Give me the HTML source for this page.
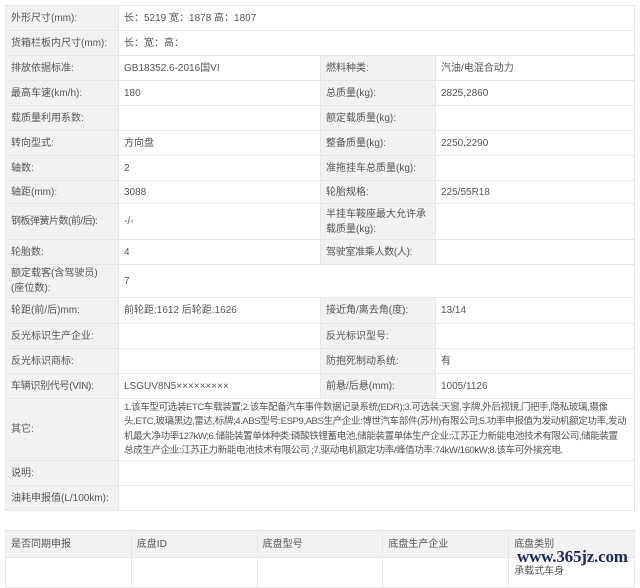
<!DOCTYPE html><html><head><meta charset="utf-8"><style>
body{margin:0;width:640px;height:573px;background:#fff;overflow:hidden;font-family:"Liberation Sans","Noto Sans CJK SC",sans-serif;font-size:10px;color:#555;position:relative}
table{border-collapse:collapse;position:absolute;left:5px;table-layout:fixed}
td{border:1px solid #e6e6e6;padding:0 5px;vertical-align:middle;line-height:15px;white-space:nowrap;overflow:hidden}
td.w{white-space:normal}
td.l{background:#f2f2f2}
#t1{top:5px;width:630px}
#t2{top:530px;width:630px}
.wm{position:absolute;left:517px;top:547px;font-family:"Liberation Serif",serif;font-size:17px;color:#1a2a5a;font-weight:bold;letter-spacing:-0.2px}
</style></head><body>
<table id="t1">
<colgroup><col style="width:113px"><col style="width:202px"><col style="width:115px"><col></colgroup>
<tr style="height:25px"><td class="l">外形尺寸(mm):</td><td colspan="3">长：5219 宽：1878 高：1807</td></tr>
<tr style="height:25px"><td class="l">货箱栏板内尺寸(mm):</td><td colspan="3">长：宽：高：</td></tr>
<tr style="height:25px"><td class="l">排放依据标准:</td><td>GB18352.6-2016国VI</td><td class="l">燃料种类:</td><td>汽油/电混合动力</td></tr>
<tr style="height:25px"><td class="l">最高车速(km/h):</td><td>180</td><td class="l">总质量(kg):</td><td>2825,2860</td></tr>
<tr style="height:25px"><td class="l">载质量利用系数:</td><td></td><td class="l">额定载质量(kg):</td><td></td></tr>
<tr style="height:25px"><td class="l">转向型式:</td><td>方向盘</td><td class="l">整备质量(kg):</td><td>2250,2290</td></tr>
<tr style="height:25px"><td class="l">轴数:</td><td>2</td><td class="l">准拖挂车总质量(kg):</td><td></td></tr>
<tr style="height:23px"><td class="l">轴距(mm):</td><td>3088</td><td class="l">轮胎规格:</td><td>225/55R18</td></tr>
<tr style="height:36px"><td class="l" style="letter-spacing:-0.5px">钢板弹簧片数(前/后):</td><td>-/-</td><td class="l w">半挂车鞍座最大允许承载质量(kg):</td><td></td></tr>
<tr style="height:25px"><td class="l">轮胎数:</td><td>4</td><td class="l" style="letter-spacing:-0.3px">驾驶室准乘人数(人):</td><td></td></tr>
<tr style="height:33px"><td class="l">额定载客(含驾驶员)<br>(座位数):</td><td colspan="3">7</td></tr>
<tr style="height:26px"><td class="l">轮距(前/后)mm:</td><td>前轮距:1612 后轮距:1626</td><td class="l">接近角/离去角(度):</td><td>13/14</td></tr>
<tr style="height:25px"><td class="l">反光标识生产企业:</td><td></td><td class="l">反光标识型号:</td><td></td></tr>
<tr style="height:25px"><td class="l">反光标识商标:</td><td></td><td class="l">防抱死制动系统:</td><td>有</td></tr>
<tr style="height:25px"><td class="l" style="letter-spacing:-0.3px">车辆识别代号(VIN):</td><td>LSGUV8N5×××××××××</td><td class="l">前悬/后悬(mm):</td><td>1005/1126</td></tr>
<tr style="height:62px"><td class="l">其它:</td><td colspan="3" style="font-size:9.6px;letter-spacing:-0.45px;line-height:14.5px">1.该车型可选装ETC车载装置;2.该车配备汽车事件数据记录系统(EDR);3.可选装:天窗,字牌,外后视镜,门把手,隐私玻璃,摄像<br>头,ETC,玻璃黑边,雷达,标牌;4.ABS型号:ESP9,ABS生产企业:博世汽车部件(苏州)有限公司;5.功率申报值为发动机额定功率,发动<br>机最大净功率127kW;6.储能装置单体种类:磷酸铁锂蓄电池,储能装置单体生产企业:江苏正力新能电池技术有限公司,储能装置<br>总成生产企业:江苏正力新能电池技术有限公司 ;7.驱动电机额定功率/峰值功率:74kW/160kW;8.该车可外接充电.</td></tr>
<tr style="height:25px"><td class="l">说明:</td><td colspan="3"></td></tr>
<tr style="height:25px"><td class="l">油耗申报值(L/100km):</td><td colspan="3"></td></tr>
</table>
<table id="t2">
<tr style="height:27px"><td class="l">是否同期申报</td><td class="l">底盘ID</td><td class="l">底盘型号</td><td class="l">底盘生产企业</td><td class="l" style="vertical-align:top;padding-top:6px">底盘类别</td></tr>
<tr style="height:30px"><td></td><td></td><td></td><td></td><td style="vertical-align:bottom;padding-bottom:8px">承载式车身</td></tr>
</table>
<div class="wm">www.365jz.com</div>
</body></html>
